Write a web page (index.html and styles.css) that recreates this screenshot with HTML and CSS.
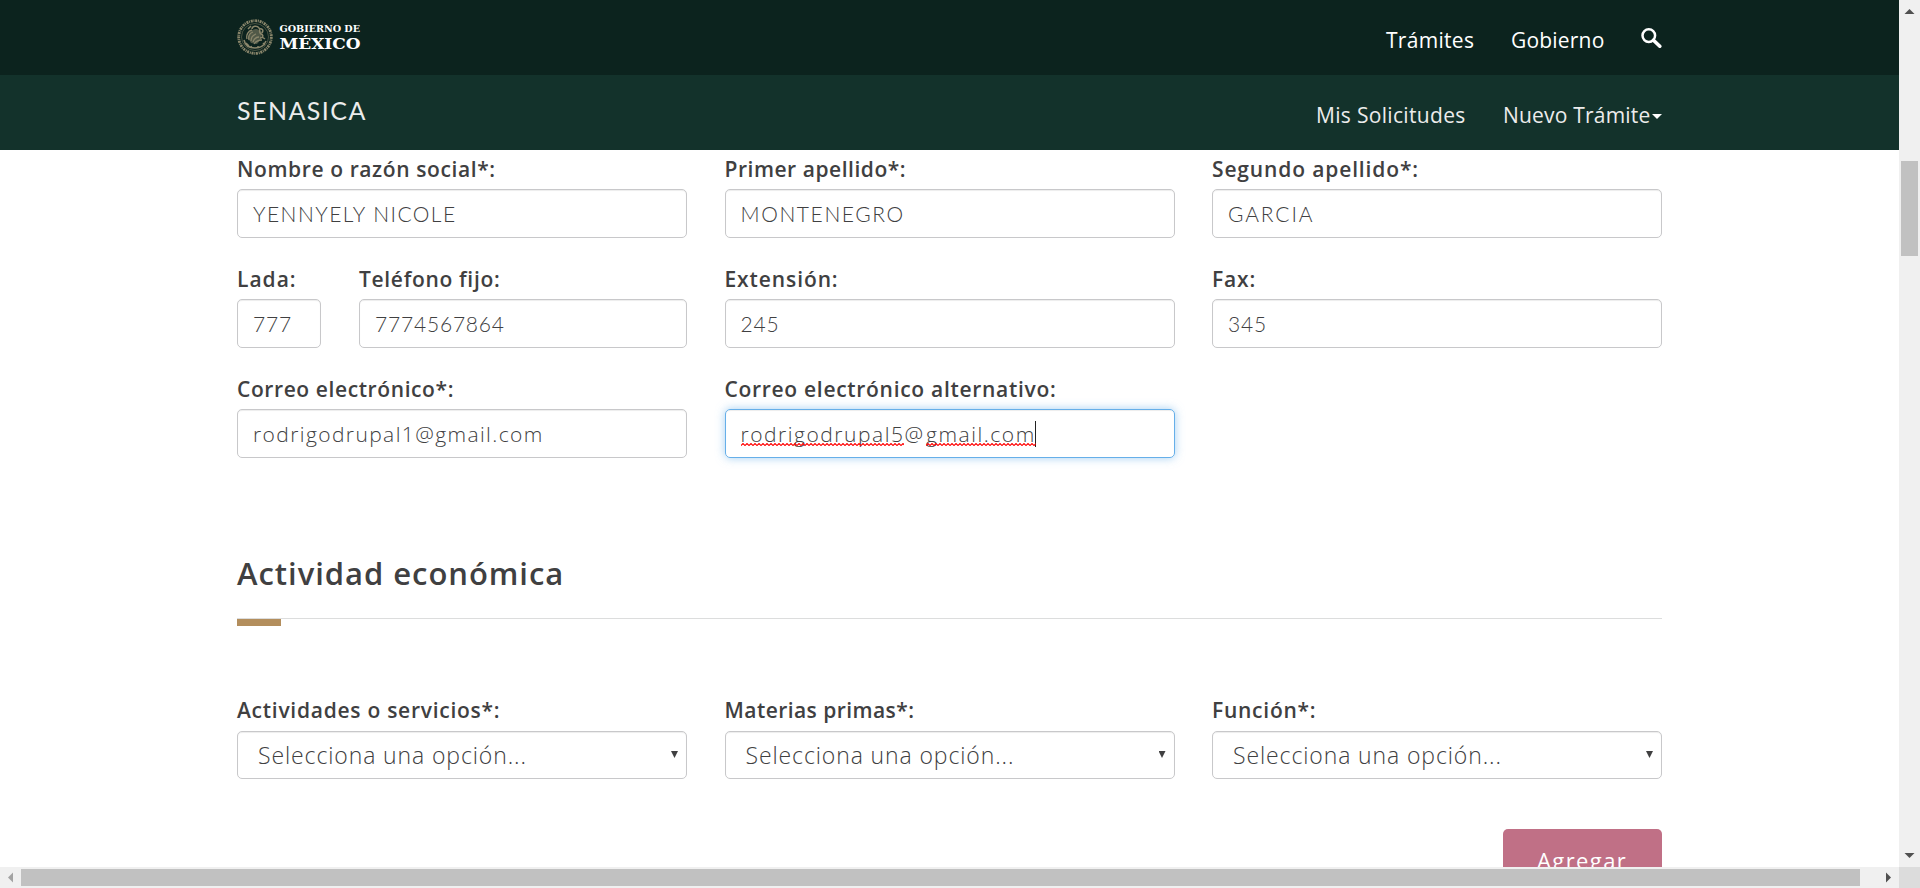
FILE: index.html
```html
<!DOCTYPE html>
<html lang="es">
<head>
<meta charset="utf-8">
<title>SENASICA - Nuevo Trámite</title>
<link rel="stylesheet" href="styles.css">
</head>
<body>
<div class="window">
  <div class="viewport">
    <header class="bar bar-gob">
      <svg class="logo" width="126" height="42" viewBox="0 0 126 42">
        <g fill="none" stroke="#8a866b">
          <circle cx="18" cy="21" r="16.300" stroke-width="2.800" stroke-dasharray="2 .7 1 .8"/>
          <circle cx="18" cy="21" r="13.500" stroke-width=".7" stroke="#626550"/>
          <path d="M7 24c1 5 5 8 11 8s9-2 11-7M9 27l3 3M14 30l1 2M21 30v2M26 27l2 2" stroke-width="1.500"/>
          <path d="M10 23c-1-4 1-8 5-9M12 24c-1-4 1-7 4-8M14 25c0-4 2-6 5-7M16 26c1-3 3-5 6-5M17 28c2-3 5-4 8-4" stroke-width="1.300"/>
          <path d="M15 13c0-3 5-4 7-1 2 2-1 4 2 6 3 1 2 4-1 4M22 13c3-1 5 1 3 4M11 13l3-3M25 21l3 2" stroke-width="1.500"/>
        </g>
        <path d="M11 22c0-6 4-9 9-9l5 3-1 7-4 5-6-1z" fill="#8a866b" opacity=".55"/>
        <g fill="#fff" font-family="DejaVu Serif" font-weight="bold">
          <text x="42.500" y="16" font-size="9.600" textLength="80.500" lengthAdjust="spacingAndGlyphs">GOBIERNO DE</text>
          <text x="42.500" y="33" font-size="15.500" textLength="81" lengthAdjust="spacingAndGlyphs">MÉXICO</text>
        </g>
      </svg>
      <nav class="nav">
        <a class="t-tramites">Trámites</a>
        <a class="t-gobierno">Gobierno</a>
        <svg class="search" width="21" height="21" viewBox="0 0 21 21" fill="none" stroke="#fff"><circle cx="7.800" cy="7.600" r="6.300" stroke-width="2.500"/><path d="M12.500 12.200l6.300 6" stroke-width="3.600" stroke-linecap="round"/></svg>
      </nav>
    </header>
    <header class="bar bar-site">
      <div class="brand">SENASICA</div>
      <nav class="nav nav-site">
        <a class="t-mis">Mis Solicitudes</a>
        <a class="t-nuevo">Nuevo Trámite</a>
        <i class="caret"></i>
      </nav>
    </header>
    <main class="content">
      <div class="row">
        <div><label class="t-nombre">Nombre o razón social*:</label><div class="control caps t-yenn">YENNYELY NICOLE</div></div>
        <div><label class="t-primer">Primer apellido*:</label><div class="control caps t-mont">MONTENEGRO</div></div>
        <div><label class="t-segundo">Segundo apellido*:</label><div class="control caps t-garcia">GARCIA</div></div>
      </div>
      <div class="row">
        <div class="phone">
          <div><label class="t-lada">Lada:</label><div class="control digits">777</div></div>
          <div><label class="t-tel">Teléfono fijo:</label><div class="control digits">7774567864</div></div>
        </div>
        <div><label class="t-ext">Extensión:</label><div class="control digits">245</div></div>
        <div><label class="t-fax">Fax:</label><div class="control digits">345</div></div>
      </div>
      <div class="row">
        <div><label class="t-correo">Correo electrónico*:</label><div class="control t-mail1">rodrigodrupal1@gmail.com</div></div>
        <div><label class="t-alt">Correo electrónico alternativo:</label><div class="control focused t-mail2"><span class="typo">rodrigodrupal5<svg class="wave"><defs><pattern id="w" width="4" height="3" patternUnits="userSpaceOnUse"><path d="M-1 1.500L0 2.500L2 .5L4 2.500L5 1.500" fill="none" stroke="#f00" stroke-width="1.100"/></pattern></defs><rect width="100%" height="3" fill="url(#w)"/></svg></span><span class="at">@</span><span class="typo">gmail.com<svg class="wave"><rect width="100%" height="3" fill="url(#w)"/></svg></span><i class="cursor"></i></div></div>
      </div>
      <h3>Actividad económica</h3>
      <div class="rule"><i></i></div>
      <div class="row row-select">
        <div><label class="t-act">Actividades o servicios*:</label><div class="control select">Selecciona una opción...<i></i></div></div>
        <div><label class="t-mat">Materias primas*:</label><div class="control select">Selecciona una opción...<i></i></div></div>
        <div><label class="t-fun">Función*:</label><div class="control select">Selecciona una opción...<i></i></div></div>
      </div>
      <div class="actions"><div class="button">Agregar</div></div>
    </main>
  </div>
  <div class="vbar">
    <svg width="21" height="21"><path d="M5.500 14L10.500 9L15.500 14z" fill="#505050"/></svg>
    <div class="vthumb"></div>
    <svg class="end" width="21" height="21"><path d="M5.500 7L10.500 12L15.500 7z" fill="#505050"/></svg>
  </div>
  <div class="hbar">
    <svg width="21" height="21"><path d="M13 5.500L8 10.500L13 15.500z" fill="#a3a3a3"/></svg>
    <div class="hthumb"></div>
    <svg class="end" width="21" height="21"><path d="M8 5.500L13 10.500L8 15.500z" fill="#505050"/></svg>
  </div>
  <div class="corner"></div>
</div>
</body>
</html>
```
FILE: styles.css
```css
* { box-sizing: border-box; }
body { margin: 0; background: #fff; color: #404041; font-family: "Open Sans", sans-serif; font-size: 21px; overflow: hidden; }
.window { display: grid; grid-template: 867px 21px / 1899px 21px; width: 1920px; height: 888px; }
.viewport { overflow: hidden; }

.bar { display: flex; justify-content: space-between; height: 75px; padding: 0 237px; color: #fff; }
.bar-gob { background: #0c231e; }
.bar-site { background: #13322b; }
.logo { margin-top: 16px; }
.nav { display: flex; line-height: 28px; padding-top: 26px; white-space: nowrap; }
.nav-site { color: #ececec; }
.search { margin-top: 2px; }
.brand { font-family: Lato, sans-serif; font-size: 25px; line-height: 34px; padding-top: 18px; letter-spacing: 1.450px; color: #ececec; }
.caret { width: 10px; height: 5px; background: #fff; clip-path: polygon(0 0, 100% 0, 50% 100%); margin-top: 13px; }
.t-tramites { width: 125px; letter-spacing: .3px; }
.t-gobierno { width: 130px; letter-spacing: .2px; }
.t-mis { width: 187px; letter-spacing: .32px; }
.t-nuevo { width: 149px; letter-spacing: .2px; }

.content { width: 1425px; margin-left: 237px; }
.row { display: grid; grid-template-columns: repeat(3, 450px); column-gap: 37.500px; height: 110px; }
.phone { display: grid; grid-template-columns: 84px 328px; column-gap: 38px; }
label { display: block; height: 39px; padding-top: 5px; line-height: 28px; font-weight: 600; white-space: nowrap; }
.control { height: 49px; padding: 0 15px; border: 1px solid #c8c8ca; border-radius: 5px; line-height: 48px; font-weight: 300; color: #404041; box-shadow: inset 0 1px 1px rgba(0,0,0,.075); white-space: nowrap; }
.caps { font-family: Lato, sans-serif; }
.digits { font-family: Lato, sans-serif; letter-spacing: .8px; }
.focused { border-color: #66afe9; box-shadow: inset 0 1px 1px rgba(0,0,0,.075), 0 0 10px rgba(102,175,233,.6); }
.typo { position: relative; }
.wave { position: absolute; left: 0; bottom: 2px; width: 100%; height: 3px; }
.at { letter-spacing: 3px; }
.cursor { display: inline-block; width: 1px; height: 26px; background: #222; vertical-align: -5px; margin-left: -1px; }
.t-nombre { letter-spacing: .600px; }
.t-primer { letter-spacing: .530px; }
.t-segundo { letter-spacing: .860px; }
.t-lada { letter-spacing: 1px; }
.t-tel { letter-spacing: .680px; }
.t-ext { letter-spacing: .900px; }
.t-fax { letter-spacing: .850px; }
.t-correo { letter-spacing: .600px; }
.t-alt { letter-spacing: .700px; }
.t-act { letter-spacing: .730px; }
.t-mat { letter-spacing: .440px; }
.t-fun { letter-spacing: .750px; }
.t-yenn { letter-spacing: 1.450px; }
.t-mont { letter-spacing: 1.600px; }
.t-garcia { letter-spacing: 1.850px; }
.t-mail1 { letter-spacing: 1.400px; }
.t-mail2 { letter-spacing: 1.530px; }

h3 { margin: 73px 0 0; font-size: 31px; font-weight: 600; line-height: 40px; letter-spacing: .960px; }
.rule { height: 8px; margin-top: 25px; border-top: 1px solid #dcdddd; }
.rule i { display: block; width: 44px; height: 7px; background: #b38e5d; }
.row-select { margin-top: 65px; height: 88px; }
.row-select label { height: 40px; }
.select { display: flex; align-items: center; justify-content: space-between; height: 48px; padding: 0 8px 1px 20px; font-size: 23px; line-height: 44px; letter-spacing: .890px; }
.select i { width: 7px; height: 7px; background: #404041; clip-path: polygon(0 0, 100% 0, 50% 100%); }
.actions { display: flex; justify-content: flex-end; margin-top: 50px; }
.button { width: 159px; height: 60px; padding-left: 34px; padding-top: 17px; border-radius: 5px; background: #c07086; color: #fff; font-size: 22px; line-height: 28px; letter-spacing: 1.400px; }

.vbar { display: flex; flex-direction: column; background: #f0f0f0; }
.vbar .end { margin-top: auto; }
.vthumb { width: 17px; height: 95px; margin: 140px 0 0 2px; background: #c1c1c1; }
.hbar { display: flex; align-items: center; background: #f0f0f0; }
.hbar .end { margin-left: auto; }
.hthumb { width: 1839px; height: 17px; background: #c1c1c1; }
.corner { background: #dcdcdc; }
```
